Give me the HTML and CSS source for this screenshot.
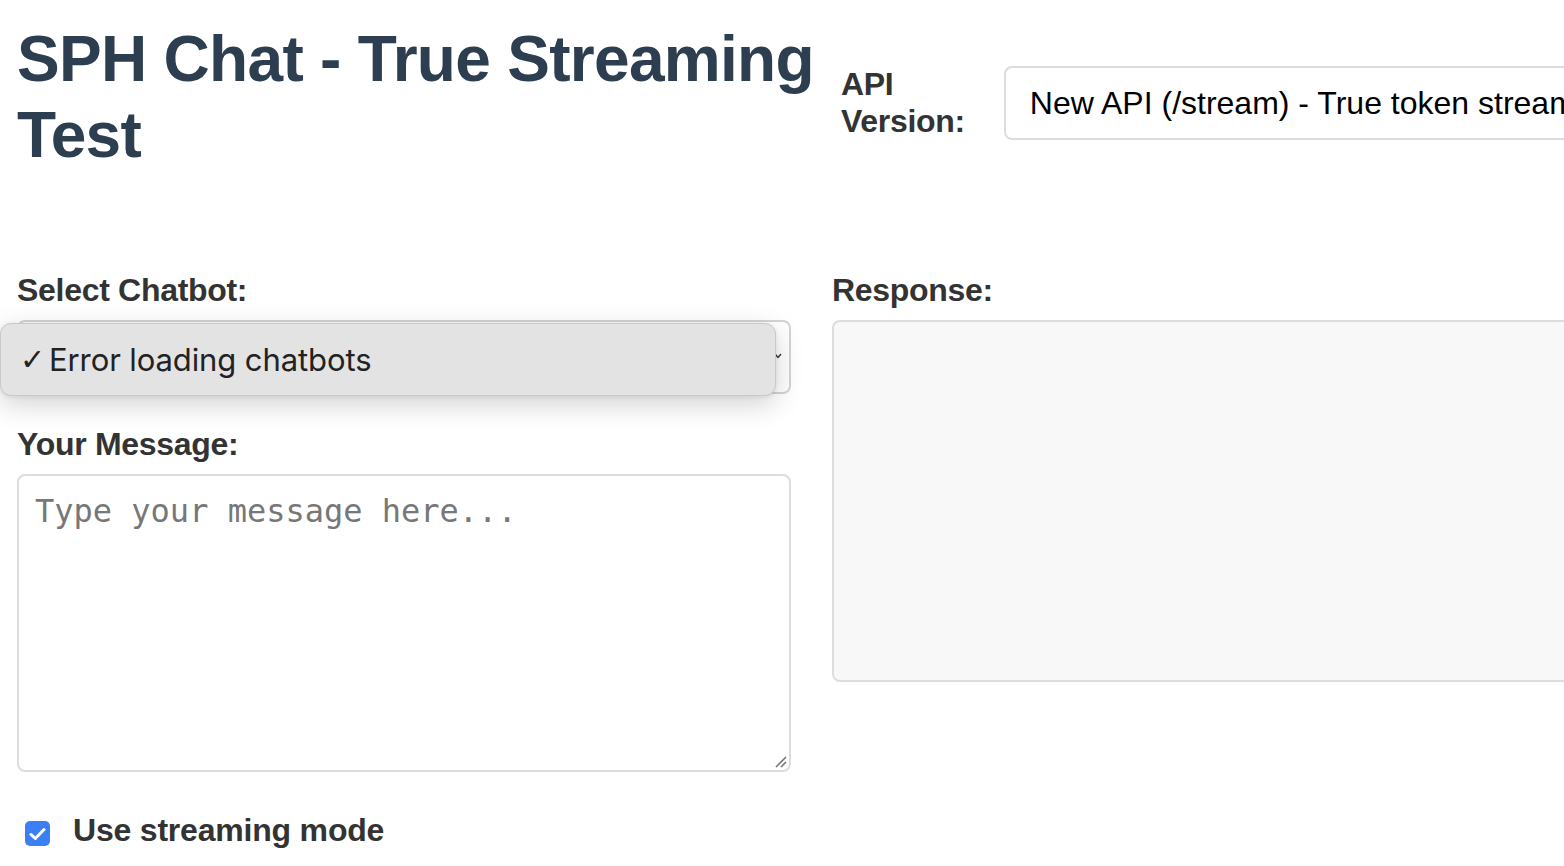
FILE: index.html
```html
<!DOCTYPE html>
<html lang="en">
<head>
<meta charset="utf-8">
<title>SPH Chat - True Streaming Test</title>
<link rel="stylesheet" href="styles.css">
</head>
<body>
<div class="page">
  <header class="header">
    <h1 class="title">SPH Chat - True Streaming Test</h1>
    <div class="api-group">
      <label class="api-label" for="api">API Version:</label>
      <div class="api-select" id="api"><span class="api-value">New API (/stream) - True token streaming</span></div>
    </div>
  </header>

  <main class="grid">
    <section class="col">
      <label class="field-label">Select Chatbot:</label>
      <div class="select-wrap">
        <div class="select-box">
          <svg class="chev" width="8" height="6" viewBox="0 0 8 6"><path d="M1 1 L4 4.5 L7 1" fill="none" stroke="#333" stroke-width="1.4"/></svg>
        </div>
        <div class="popup">
          <span class="popup-check">✓</span><span class="popup-text">Error loading chatbots</span>
        </div>
      </div>

      <label class="field-label msg-label">Your Message:</label>
      <div class="textarea">
        <span class="placeholder">Type your message here...</span>
        <svg class="grip" width="14" height="14" viewBox="0 0 14 14"><path d="M13 3 L3 13 M13 8 L8 13" stroke="#777" stroke-width="1.6" fill="none"/></svg>
      </div>

      <div class="check-row">
        <span class="checkbox"><svg width="17" height="14" viewBox="0 0 17 14"><path d="M2 7.5 L6.3 11.5 L15 2.5" fill="none" stroke="#fff" stroke-width="3" stroke-linecap="round" stroke-linejoin="round"/></svg></span>
        <span class="check-label">Use streaming mode</span>
      </div>
    </section>

    <section class="col">
      <label class="field-label">Response:</label>
      <div class="response"></div>
    </section>
  </main>
</div>
</body>
</html>
```

FILE: styles.css
```css
html, body {
  margin: 0;
  padding: 0;
  overflow: hidden;
  background: #ffffff;
}

.page {
  width: 1600px;
  padding: 21px 0 0 17px;
  font-family: "Liberation Sans", Arial, sans-serif;
  color: #333;
}

.header {
  display: flex;
  align-items: flex-start;
}

.title {
  flex: 0 0 800px;
  width: 800px;
  margin: 0;
  font-size: 64px;
  line-height: 76px;
  font-weight: 700;
  letter-spacing: -0.7px;
  color: #2c3e50;
}

.api-group {
  display: flex;
  align-items: center;
  margin-top: 45px;
  margin-left: 24px;
}

.api-label {
  width: min-content;
  font-size: 32px;
  line-height: 37px;
  font-weight: 700;
  letter-spacing: -0.3px;
  color: #333;
  margin-right: 39px;
}

.api-select {
  box-sizing: border-box;
  width: 600px;
  height: 74px;
  border: 2px solid #dddddd;
  border-right: none;
  border-radius: 8px 0 0 8px;
  padding: 0 0 0 24px;
  font-size: 32px;
  line-height: 70px;
  color: #000;
  white-space: nowrap;
  overflow: hidden;
}

.grid {
  display: grid;
  grid-template-columns: 774px 774px;
  column-gap: 41px;
  margin-top: 99px;
}

.col {
  display: flex;
  flex-direction: column;
}

.field-label {
  display: block;
  font-size: 32px;
  line-height: 37px;
  font-weight: 700;
  letter-spacing: -0.3px;
  color: #333;
  margin-bottom: 11px;
}

.msg-label {
  margin-top: 32px;
}

.select-wrap {
  position: relative;
  height: 74px;
}

.select-box {
  box-sizing: border-box;
  height: 74px;
  border: 2px solid #d4d4d4;
  border-radius: 8px;
  background: #fff;
  position: relative;
}

.chev {
  position: absolute;
  right: 7px;
  top: 31px;
}

.popup {
  position: absolute;
  left: -17px;
  top: 3px;
  box-sizing: border-box;
  width: 776px;
  height: 73px;
  background: #e3e3e3;
  border: 1px solid #c9c9c9;
  border-radius: 11px;
  box-shadow: 0 8px 28px rgba(0, 0, 0, 0.18), 0 1px 4px rgba(0, 0, 0, 0.08);
  display: flex;
  align-items: center;
  padding-left: 19px;
  font-family: Inter, "Noto Sans", sans-serif;
  font-size: 31px;
  color: #222;
}

.popup-check {
  font-size: 30px;
  width: 29px;
  font-family: "DejaVu Sans", sans-serif;
  line-height: 1;
}

.popup-text {
  letter-spacing: -0.1px;
}

.textarea {
  box-sizing: border-box;
  height: 298px;
  border: 2px solid #dddddd;
  border-radius: 8px;
  padding: 16px 16px;
  position: relative;
  background: #fff;
}

.placeholder {
  font-family: "DejaVu Sans Mono", monospace;
  font-size: 32px;
  line-height: 38px;
  color: #777;
}

.grip {
  position: absolute;
  right: 2px;
  bottom: 2px;
}

.check-row {
  display: flex;
  align-items: center;
  margin-top: 40px;
  padding-left: 8px;
}

.checkbox {
  width: 25px;
  height: 25px;
  border-radius: 5px;
  background: #3b7ff5;
  display: flex;
  align-items: center;
  justify-content: center;
  margin-right: 23px;
  margin-top: 6px;
}

.check-label {
  font-size: 32px;
  line-height: 37px;
  font-weight: 700;
  letter-spacing: -0.2px;
  color: #333;
}

.response {
  box-sizing: border-box;
  height: 362px;
  border: 2px solid #dddddd;
  border-radius: 8px;
  background: #f8f8f8;
}
```
